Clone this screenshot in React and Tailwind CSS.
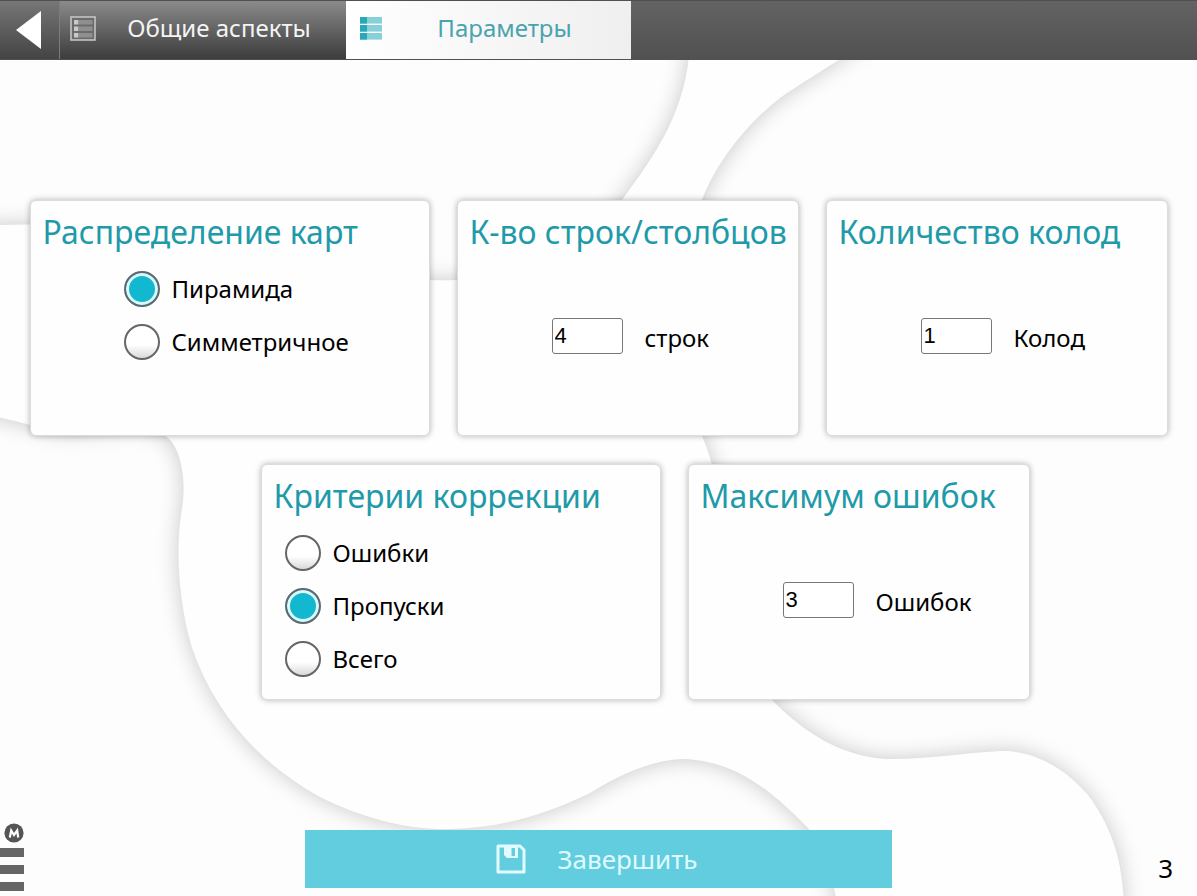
import { useState } from "react";

const FLOW =
  "M690 40 C688 110 655 155 622 200 C580 260 500 283 430 280 C330 278 270 250 200 240 C130 232 70 222 0 225 L-60 225 L-60 412 C-20 408 20 424 60 432 C100 436 150 415 172 442 C184 460 186 488 181 515 C176 550 178 600 192 648 C215 715 262 765 320 797 C360 817 405 830 450 829 C500 828 545 815 590 793 C622 773 655 759 686 759 C740 762 775 795 808 828 C825 850 835 875 842 940 L1122 940 C1128 880 1118 835 1088 795 C1062 765 1030 750 1000 751 C960 753 925 760 885 759 C835 755 800 728 772 700 C735 660 715 600 720 540 C722 500 713 460 702 436 C688 380 680 280 702 200 C715 165 745 125 780 98 C800 84 830 66 870 40 Z";

function Background() {
  return (
    <svg
      aria-hidden="true"
      className="absolute inset-0 -z-10 h-full w-full"
      viewBox="0 0 1197 896"
      preserveAspectRatio="none"
    >
      <defs>
        <filter id="soft" x="-10%" y="-10%" width="120%" height="120%">
          <feGaussianBlur stdDeviation="11" />
        </filter>
      </defs>
      <rect width="1197" height="896" fill="#fdfdfd" />
      <path d={FLOW} fill="#000" opacity="0.21" filter="url(#soft)" />
      <path d={FLOW} fill="#fefefe" />
    </svg>
  );
}

function ListIcon() {
  return (
    <svg width="26" height="25" viewBox="0 0 26 25" aria-hidden="true">
      <rect x="1" y="1" width="24" height="23" fill="#6b6b6b" stroke="#c4c4c4" strokeWidth="1.6" />
      {[4, 10.5, 17].map((y) => (
        <g key={y}>
          <rect x="4" y={y} width="4.5" height="4.5" fill="#c9c9c9" />
          <rect x="8.5" y={y} width="14" height="4.5" fill="#8f8f8f" />
        </g>
      ))}
    </svg>
  );
}

function ActiveListIcon() {
  return (
    <svg width="22" height="23" viewBox="0 0 22 23" aria-hidden="true">
      {[0, 8, 16].map((y) => (
        <g key={y}>
          <rect x="0" y={y} width="22" height="6.6" fill="#85d0d9" />
          <rect x="0" y={y} width="7" height="6.6" fill="#27a9b8" />
        </g>
      ))}
    </svg>
  );
}

function SaveIcon() {
  return (
    <svg width="30" height="30" viewBox="0 0 30 30" aria-hidden="true">
      <path d="M2 2 H24 L28 6 V28 H2 Z" fill="none" stroke="#e2fbff" strokeWidth="3" strokeLinejoin="round" />
      <path d="M8 2 H22 V14 H11 L8 11 Z M15.500 4 V12 H19 V4 Z" fill="#e2fbff" fillRule="evenodd" />
    </svg>
  );
}

function Card({ title, wide, children }) {
  return (
    <section
      className={`${wide ? "w-[400px]" : "w-[342px]"} min-h-[236px] rounded-md border border-[#dcdcdc] bg-[#fefefe] px-3 pt-2 shadow-[0_0_6px_rgba(0,0,0,0.3)]`}
    >
      <h2 className="whitespace-nowrap text-[32px] leading-[46px] text-[#1f9aa9]">{title}</h2>
      {children}
    </section>
  );
}

function Radios({ name, options, value, onChange, indent }) {
  return (
    <div className={`${indent ? "pl-[81px]" : "pl-[11px]"} flex flex-col gap-[17px] pt-4`}>
      {options.map((o) => (
        <label key={o} className="flex h-9 items-center gap-3 text-[24px] leading-9 text-black">
          <input
            type="radio"
            name={name}
            checked={value === o}
            onChange={() => onChange(o)}
            className="size-9 shrink-0 appearance-none rounded-full border-2 border-[#666] bg-linear-to-b from-white from-60% to-[#d9d9d9] checked:border-[#5b6b70] checked:bg-[#11b8cf] checked:bg-none checked:shadow-[inset_0_0_0_3px_#dff8fb]"
          />
          {o}
        </label>
      ))}
    </div>
  );
}

function NumberField({ unit, initial }) {
  const [v, setV] = useState(initial);
  return (
    <label className="flex items-start gap-[22px] pt-[63px] pl-[82px] text-[24px] leading-10 text-black">
      <input
        type="text"
        inputMode="numeric"
        value={v}
        onChange={(e) => setV(e.target.value)}
        className="h-9 w-[71px] rounded-[3px] border border-[#777] bg-white px-[2px] font-['Liberation_Sans',sans-serif] text-[22px]"
      />
      {unit}
    </label>
  );
}

function Logo() {
  return (
    <div className="flex w-6 flex-col gap-2">
      <svg className="ml-1" width="20" height="20" viewBox="0 0 20 20" role="img" aria-label="M">
        <circle cx="10" cy="10" r="9.600" fill="#555" />
        <path d="M5.800 14.500 L7.200 7.500 L10 12 L13.200 7.500 L14.200 14.500" fill="none" stroke="#fff" strokeWidth="2.200" />
      </svg>
      <div className="-mt-[3px] h-[9px] bg-[#666]" />
      <div className="h-[9px] bg-[#666]" />
      <div className="h-[9px] bg-[#666]" />
    </div>
  );
}

export default function App() {
  const [layout, setLayout] = useState("Пирамида");
  const [criteria, setCriteria] = useState("Пропуски");
  return (
    <div className="relative isolate flex min-h-screen flex-col font-['Noto_Sans','Noto_Sans_CJK_SC',sans-serif]">
      <Background />
      <nav className="flex h-[60px] border-y border-[#505050] bg-linear-to-b from-[#636363] to-[#515151] text-[24px]">
        <button
          type="button"
          aria-label="Назад"
          className="flex w-[60px] items-center border-r border-[#7c7c7c] bg-linear-to-b from-[#777] to-[#444] pl-4"
        >
          <svg width="25" height="38" viewBox="0 0 25 38" aria-hidden="true">
            <path d="M25 0 V38 L0 19 Z" fill="#fff" />
          </svg>
        </button>
        <button
          type="button"
          className="flex w-[286px] items-center bg-linear-to-b from-[#8b8b8b] to-[#3d3d3d] pr-1 pb-1 pl-[10px] text-[#f4f4f4]"
        >
          <ListIcon />
          <span className="flex-1 text-center">Общие аспекты</span>
        </button>
        <button
          type="button"
          className="flex w-[285px] items-center bg-linear-to-r from-white to-[#efefef] pr-1 pb-1 pl-[14px] text-[#4aa3ad]"
        >
          <ActiveListIcon />
          <span className="flex-1 text-center">Параметры</span>
        </button>
      </nav>

      <main className="flex flex-1 flex-col gap-7 pt-[140px]">
        <div className="flex flex-wrap justify-center gap-[27px]">
          <Card title="Распределение карт" wide>
            <Radios
              name="layout"
              options={["Пирамида", "Симметричное"]}
              value={layout}
              onChange={setLayout}
              indent
            />
          </Card>
          <Card title="К-во строк/столбцов">
            <NumberField unit="строк" initial="4" />
          </Card>
          <Card title="Количество колод">
            <NumberField unit="Колод" initial="1" />
          </Card>
        </div>
        <div className="flex flex-wrap justify-center gap-[27px] pl-[93px]">
          <Card title="Критерии коррекции" wide>
            <Radios
              name="criteria"
              options={["Ошибки", "Пропуски", "Всего"]}
              value={criteria}
              onChange={setCriteria}
            />
          </Card>
          <Card title="Максимум ошибок">
            <NumberField unit="Ошибок" initial="3" />
          </Card>
        </div>
      </main>

      <footer className="grid grid-cols-[1fr_49%_1fr] items-end">
        <div className="pb-[5px]">
          <Logo />
        </div>
        <button
          type="button"
          className="mb-2 flex h-[58px] items-center justify-center gap-8 bg-[#62cddf] pr-1 text-[26px] text-[#dffaff]"
        >
          <SaveIcon />
          <span>Завершить</span>
        </button>
        <div className="pr-6 pb-2 text-right text-[26px] leading-10 text-black">3</div>
      </footer>
    </div>
  );
}
